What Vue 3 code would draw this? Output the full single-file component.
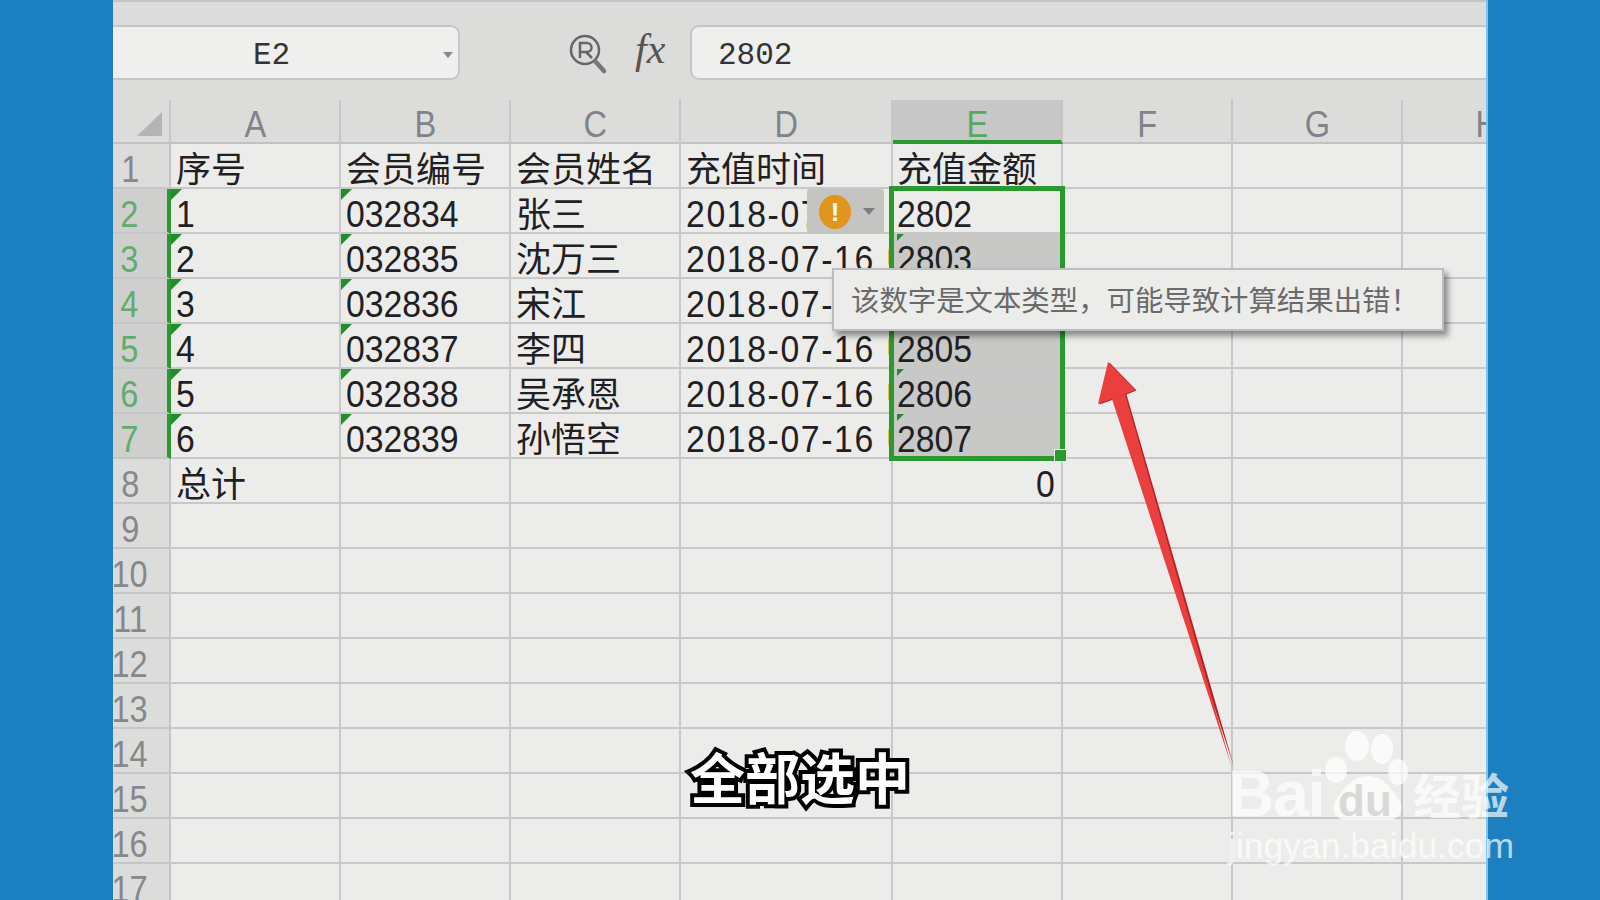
<script setup>
const cols = ['A', 'B', 'C', 'D', 'E', 'F', 'G', 'H']
const data = [
  ['序号', '会员编号', '会员姓名', '充值时间', '充值金额'],
  ['1', '032834', '张三', '2018-07-16', '2802'],
  ['2', '032835', '沈万三', '2018-07-16', '2803'],
  ['3', '032836', '宋江', '2018-07-16', '2804'],
  ['4', '032837', '李四', '2018-07-16', '2805'],
  ['5', '032838', '吴承恩', '2018-07-16', '2806'],
  ['6', '032839', '孙悟空', '2018-07-16', '2807'],
  ['总计', '', '', '', ''],
]
const rows = Array.from({ length: 17 }, (_, i) => i + 1)
const cell = (r, c) => (data[r - 1] ? data[r - 1][c] || '' : '')
const isData = (r) => r >= 2 && r <= 7
const isNum = (t) => /^[0-9-]+$/.test(t)
</script>

<template>
  <div class="stage">
    <div class="window">
      <div class="formula">
        <div class="namebox">
          <span class="mono namebox-text">E2</span>
          <span class="caret"></span>
        </div>
        <div class="tools">
          <svg class="zoom-icon" width="42" height="42" viewBox="0 0 42 42">
            <circle cx="18" cy="17" r="14" fill="none" stroke="#666" stroke-width="2.5" />
            <path d="M13 25V10h7a4.500 4.500 0 0 1 0 9h-7M19 19l6 6" fill="none" stroke="#666" stroke-width="2.500" />
            <path d="M28 28l9 10" stroke="#777" stroke-width="4.500" stroke-linecap="round" />
          </svg>
          <span class="fx">fx</span>
        </div>
        <div class="field"><span class="mono">2802</span></div>
      </div>

      <div class="sheet">
        <div class="row head-row">
          <div class="corner"><span class="tri"></span></div>
          <div
            v-for="c in cols"
            :key="c"
            class="col-head"
            :class="{ 'col-active': c === 'E', 'col-d': c === 'D' }"
          ><span class="narrow-c">{{ c }}</span></div>
        </div>
        <div v-for="r in rows" :key="r" class="row">
          <div class="row-head" :class="{ 'row-active': isData(r) }"><span class="narrow-c">{{ r }}</span></div>
          <div
            v-for="(c, i) in cols"
            :key="c"
            class="cell"
            :class="{
              'col-d': c === 'D',
              dim: c === 'E' && r >= 3 && r <= 7,
              date: c === 'D' && isData(r),
              'col-e': c === 'E',
            }"
          >
            <span v-if="isData(r) && (i < 2 || (i === 4 && r > 2))" class="flag" :class="{ 'flag-small': i === 4 }"></span>
            <span v-if="c === 'D' && r > 2 && isData(r)" class="sliver"></span>
            <span class="txt" :class="{ num: isNum(cell(r, i)) }">{{ cell(r, i) }}</span>
            <span v-if="c === 'E' && r === 8" class="total">0</span>
          </div>
        </div>
      </div>

      <div class="warn">
        <span class="warn-dot">!</span>
        <span class="warn-caret"></span>
      </div>

      <div class="selection"><span class="handle"></span></div>

      <div class="tip">该数字是文本类型，可能导致计算结果出错！</div>

      <svg class="arrow" width="1373" height="900" viewBox="113 0 1373 900">
        <polygon points="1108,362 1135,390 1125,394 1233,768 1112,399 1098,404" fill="#b52226" transform="translate(1.5 0.5)" />
        <polygon points="1108,362 1135,390 1125,394 1232,768 1112,399 1098,404" fill="#ea3e3f" />
      </svg>

      <div class="subtitle">全部选中</div>
    </div>

    <div class="mark">
      <svg class="paw" width="120" height="130" viewBox="1320 730 120 130">
        <g fill="#fff" fill-opacity=".72">
          <ellipse cx="1357" cy="746" rx="12" ry="15" />
          <ellipse cx="1382" cy="749" rx="11" ry="15" />
          <ellipse cx="1336" cy="770" rx="11" ry="13" />
          <ellipse cx="1398" cy="772" rx="10" ry="13" />
          <path d="M1368 776c15 0 23 12 30 22 7 10 3 22-10 22h-40c-13 0-18-10-12-20 8-11 16-24 32-24z" />
        </g>
        <text x="1338" y="816" class="paw-text">du</text>
      </svg>
      <span class="mark-bai">Bai</span>
      <span class="mark-cn">经验</span>
      <span class="mark-url">jingyan.baidu.com</span>
    </div>
  </div>
</template>

<style>
html, body { margin: 0; background: #1c80c0; }
</style>

<style scoped>
.stage {
  position: relative;
  width: 1600px;
  height: 900px;
  background: #1c80c0;
  overflow: hidden;
  padding-left: 113px;
  box-sizing: border-box;
}
.window {
  position: relative;
  width: 1375px;
  height: 900px;
  overflow: hidden;
  background: #ececea;
  border-right: 2px solid #7cc6ee;
  box-sizing: border-box;
  font-family: "Liberation Sans", "Noto Sans CJK SC", sans-serif;
  color: #1f2024;
}
.mono { font-family: "Liberation Mono", monospace; font-size: 31px; color: #333; }

.formula {
  height: 100px;
  box-sizing: border-box;
  background: #dcdcdb;
  border-top: 2px solid #c4c4c4;
  padding-top: 23px;
  display: flex;
  align-items: flex-start;
}
.namebox {
  width: 347px;
  height: 55px;
  box-sizing: border-box;
  background: #efefee;
  border: 2px solid #c6c6c6;
  border-left: 0;
  border-radius: 0 9px 9px 0;
  display: flex;
  align-items: center;
  padding: 5px 5px 0 140px;
  justify-content: space-between;
}
.caret {
  width: 0;
  height: 0;
  border: 5px solid transparent;
  border-top: 6px solid #888;
  border-bottom: 0;
}
.tools {
  width: 230px;
  height: 55px;
  display: flex;
  align-items: center;
  padding-left: 107px;
  box-sizing: border-box;
  gap: 26px;
}
.zoom-icon { flex: none; margin-top: 2px; }
.fx {
  font-family: "Liberation Serif", serif;
  font-style: italic;
  font-size: 42px;
  color: #555;
  line-height: 1;
  margin-top: -8px;
}
.field {
  flex: 1;
  height: 55px;
  box-sizing: border-box;
  background: #efefee;
  border: 2px solid #c6c6c6;
  border-right: 0;
  border-radius: 9px 0 0 9px;
  display: flex;
  align-items: center;
  padding: 5px 0 0 26px;
}

.sheet { display: flex; flex-direction: column; }
.row { display: flex; height: 45px; flex: none; }
.head-row {
  height: 44px;
  background: #dcdcdb;
}
.corner {
  width: 58px;
  flex: none;
  border-right: 2px solid #c6c6c6;
  border-bottom: 2px solid #c2c2c2;
  box-sizing: border-box;
  display: flex;
  align-items: flex-end;
  justify-content: flex-end;
  padding: 0 7px 6px 0;
}
.tri {
  width: 0;
  height: 0;
  border-left: 25px solid transparent;
  border-bottom: 24px solid #b4b4b4;
}
.col-head {
  width: 170px;
  flex: none;
  box-sizing: border-box;
  border-right: 2px solid #c6c6c6;
  border-bottom: 2px solid #c2c2c2;
  font-size: 37px;
  color: #80848a;
  text-align: center;
  line-height: 50px;
}
.narrow-c { display: inline-block; transform: scaleX(.88); }
.col-head.col-d, .cell.col-d { width: 212px; }
.col-head.col-active {
  background: #c8c8c8;
  color: #58a860;
  border-bottom: 4px solid #2a9a30;
}
.row-head {
  width: 58px;
  flex: none;
  box-sizing: border-box;
  background: #dcdcdb;
  border-right: 2px solid #c6c6c6;
  border-bottom: 2px solid #c6c6c6;
  color: #85888c;
  font-size: 37px;
  display: flex;
  justify-content: center;
  align-items: center;
  padding: 8px 22px 0 0;
  overflow: visible;
  white-space: nowrap;
}
.row-active {
  background: #cfcfce;
  color: #62ab6c;
  border-right: 4px solid #2a9a30;
}
.cell {
  position: relative;
  width: 170px;
  flex: none;
  box-sizing: border-box;
  border-right: 2px solid #c8c8c8;
  border-bottom: 2px solid #c8c8c8;
  padding: 5px 0 0 5px;
  font-size: 35px;
  line-height: 41px;
  white-space: nowrap;
  overflow: hidden;
}
.txt.num {
  display: inline-block;
  font-size: 37.5px;
  transform: scaleX(.9);
  transform-origin: left center;
}
.cell.date .txt { letter-spacing: 1.8px; }
.cell.col-e { padding-left: 4px; }
.cell.dim { background: #c8c8c7; }
.flag {
  position: absolute;
  left: 0;
  top: 0;
  width: 0;
  height: 0;
  border-top: 11px solid #1f8f2a;
  border-right: 11px solid transparent;
}
.flag-small { border-top-width: 7px; border-right-width: 7px; left: 4px; top: 0; }
.sliver {
  position: absolute;
  right: 0;
  top: 14px;
  width: 3px;
  height: 18px;
  border-radius: 3px 0 0 3px;
  background: #e7bb5a;
}
.total {
  position: absolute;
  right: 5px;
  top: 5px;
  font-size: 37.5px;
  display: inline-block;
  transform: scaleX(.9);
}

.warn {
  position: absolute;
  left: 694px;
  top: 189px;
  width: 77px;
  height: 45px;
  background: #c4c4c3;
  border-radius: 3px;
  display: flex;
  align-items: center;
  padding-left: 12px;
  box-sizing: border-box;
  gap: 12px;
}
.warn-dot {
  width: 32px;
  height: 34px;
  border-radius: 50%;
  background: #e0951c;
  color: #fff;
  font-weight: 700;
  font-size: 26px;
  line-height: 34px;
  text-align: center;
}
.warn-caret {
  width: 0;
  height: 0;
  border: 6px solid transparent;
  border-top: 7px solid #7d7d7d;
  border-bottom: 0;
}
.selection {
  position: absolute;
  left: 776px;
  top: 186px;
  width: 176px;
  height: 275px;
  box-sizing: border-box;
  border: 5px solid #2a9a30;
}
.handle {
  position: absolute;
  right: -7px;
  bottom: -6px;
  width: 11px;
  height: 11px;
  background: #2a9a30;
  border: 1px solid #ececea;
}
.tip {
  position: absolute;
  left: 719px;
  top: 268px;
  width: 612px;
  height: 63px;
  box-sizing: border-box;
  background: #ececea;
  border: 2px solid #bdbdbd;
  box-shadow: 4px 5px 6px rgba(0, 0, 0, .42);
  font-family: "Noto Sans CJK SC", sans-serif;
  font-size: 28.4px;
  color: #6a6a6a;
  line-height: 58px;
  padding-left: 17px;
  white-space: nowrap;
}
.arrow {
  position: absolute;
  left: 0;
  top: 0;
  pointer-events: none;
}
.subtitle {
  position: absolute;
  left: 577px;
  top: 737px;
  font-family: "Noto Sans CJK SC", sans-serif;
  font-weight: 700;
  font-size: 55px;
  line-height: 76px;
  color: #fff;
  -webkit-text-stroke: 8px #000;
  paint-order: stroke fill;
  white-space: nowrap;
}
.mark {
  position: absolute;
  left: 0;
  top: 0;
  width: 1600px;
  height: 900px;
  pointer-events: none;
  color: rgba(255, 255, 255, .7);
  font-family: "Liberation Sans", "Noto Sans CJK SC", sans-serif;
}
.paw { position: absolute; left: 1320px; top: 730px; }
.paw-text {
  font-family: "Liberation Sans", sans-serif;
  font-size: 44px;
  font-weight: 700;
  fill: #d9d9d7;
}
.mark-bai {
  position: absolute;
  left: 1228px;
  top: 757px;
  font-size: 64px;
  font-weight: 700;
  line-height: 74px;
  letter-spacing: -1px;
}
.mark-cn {
  position: absolute;
  left: 1413px;
  top: 758px;
  font-family: "Noto Sans CJK SC", sans-serif;
  font-size: 48px;
  font-weight: 700;
  line-height: 70px;
  white-space: nowrap;
}
.mark-url {
  position: absolute;
  left: 1228px;
  top: 825px;
  font-size: 35.500px;
  line-height: 42px;
  white-space: nowrap;
}
</style>
